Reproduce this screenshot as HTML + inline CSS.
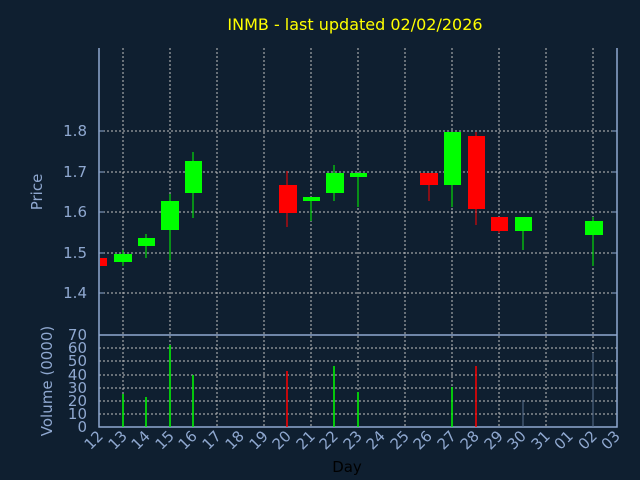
<!DOCTYPE html><html><head><style>body{margin:0;background:#0f1f30}svg{display:block}</style></head><body>
<svg width="640" height="480" xmlns="http://www.w3.org/2000/svg" font-family="DejaVu Sans, sans-serif">
<rect width="640" height="480" fill="#0f1f30"/>
<text x="355" y="30" fill="#ffff00" font-size="16" text-anchor="middle">INMB - last updated 02/02/2026</text>
<g stroke="#c0c0c0" stroke-dasharray="2,2" stroke-width="1">
<path d="M123 48V427M170 48V427M217 48V427M264 48V427M311 48V427M358 48V427M405 48V427M452 48V427M499 48V427M546 48V427M593 48V427"/>
<path d="M99 293H617M99 253H617M99 212H617M99 172H617M99 131H617"/>
<path d="M99 414H617M99 401H617M99 388H617M99 375H617M99 361H617M99 348H617"/>
</g>
<g stroke="#8fa8d0" stroke-width="1.5" fill="none">
<path d="M99 48V427H617V48M99 335H617"/>
</g>
<g stroke="#8fa8d0" stroke-width="1">
<path d="M99 293h5M99 253h5M99 212h5M99 172h5M99 131h5M612 293h5M612 253h5M612 212h5M612 172h5M612 131h5"/>
</g>
<g font-size="15" fill="#8fa8d0" text-anchor="end">
<text x="87" y="298">1.4</text><text x="87" y="258">1.5</text><text x="87" y="217">1.6</text><text x="87" y="177">1.7</text><text x="87" y="136">1.8</text>
<text x="87" y="432">0</text><text x="87" y="419">10</text><text x="87" y="406">20</text><text x="87" y="393">30</text><text x="87" y="380">40</text><text x="87" y="366">50</text><text x="87" y="353">60</text><text x="87" y="340">70</text>
</g>
<text transform="translate(42,192) rotate(-90)" fill="#8fa8d0" font-size="15" text-anchor="middle">Price</text>
<text transform="translate(52,381) rotate(-90)" fill="#8fa8d0" font-size="15" text-anchor="middle">Volume (0000)</text>
<text x="347" y="472" fill="#000" font-size="15" text-anchor="middle">Day</text>
<g font-size="15" fill="#8fa8d0" text-anchor="end">
<text transform="translate(104,437) rotate(-45)">12</text><text transform="translate(128,437) rotate(-45)">13</text><text transform="translate(151,437) rotate(-45)">14</text><text transform="translate(175,437) rotate(-45)">15</text><text transform="translate(198,437) rotate(-45)">16</text><text transform="translate(222,437) rotate(-45)">17</text><text transform="translate(245,437) rotate(-45)">18</text><text transform="translate(269,437) rotate(-45)">19</text><text transform="translate(292,437) rotate(-45)">20</text><text transform="translate(316,437) rotate(-45)">21</text><text transform="translate(339,437) rotate(-45)">22</text><text transform="translate(363,437) rotate(-45)">23</text><text transform="translate(386,437) rotate(-45)">24</text><text transform="translate(410,437) rotate(-45)">25</text><text transform="translate(433,437) rotate(-45)">26</text><text transform="translate(457,437) rotate(-45)">27</text><text transform="translate(480,437) rotate(-45)">28</text><text transform="translate(504,437) rotate(-45)">29</text><text transform="translate(527,437) rotate(-45)">30</text><text transform="translate(551,437) rotate(-45)">31</text><text transform="translate(574,437) rotate(-45)">01</text><text transform="translate(598,437) rotate(-45)">02</text><text transform="translate(621,437) rotate(-45)">03</text>
</g>
<g stroke="#00ff00" stroke-width="1">
<path d="M123 250V266M146 234V258M170 194V260M193 152V218M311 197V221M334 165V201M358 173V207M452 132V207M523 217V250M593 217V266"/>
</g>
<g stroke="#ff0000" stroke-width="1"><path d="M287 171V227M429 173V201M476 132V225M499 217V233"/></g>
<g fill="#00ff00">
<rect x="114" y="254" width="18" height="8"/><rect x="138" y="238" width="17" height="8"/><rect x="161" y="201" width="18" height="29"/><rect x="185" y="161" width="17" height="32"/><rect x="303" y="197" width="17" height="4"/><rect x="326" y="173" width="18" height="20"/><rect x="350" y="173" width="17" height="4"/><rect x="444" y="132" width="17" height="53"/><rect x="515" y="217" width="17" height="14"/><rect x="585" y="221" width="18" height="14"/>
</g>
<g fill="#ff0000">
<rect x="100" y="258" width="7" height="8"/><rect x="279" y="185" width="18" height="28"/><rect x="420" y="173" width="18" height="12"/><rect x="468" y="136" width="17" height="73"/><rect x="491" y="217" width="17" height="14"/>
</g>
<g stroke="#00ff00" stroke-width="1.5"><path d="M123 427V394M146 427V397M170 427V345M193 427V375M334 427V366M358 427V392M452 427V387"/></g>
<g stroke="#ff0000" stroke-width="1.5"><path d="M287 427V371M476 427V366"/></g>
<g stroke="#5a7090" stroke-width="1"><path d="M523 427V400M593 427V353"/></g>
</svg>
</body></html>
